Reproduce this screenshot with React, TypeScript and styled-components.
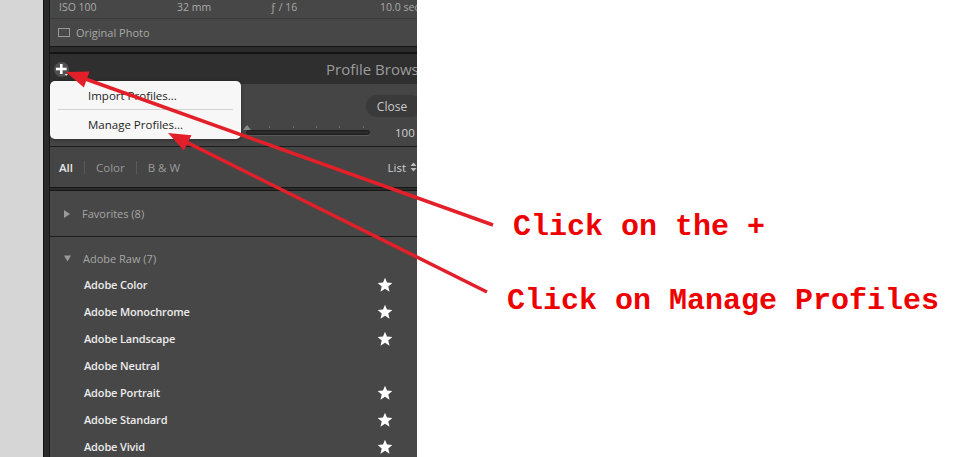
import React from 'react';
import styled, { createGlobalStyle } from 'styled-components';

const Global = createGlobalStyle`
  html, body { margin: 0; padding: 0; background: #ffffff; }
  body { width: 955px; height: 457px; overflow: hidden; font-family: "Open Sans", "Noto Sans", sans-serif; }
`;

const Page = styled.div`
  position: relative;
  display: flex;
  width: 955px;
  height: 457px;
  overflow: hidden;
  background: #ffffff;
`;

const Gutter = styled.div`
  width: 43px;
  flex: none;
  background: #d6d6d6;
`;

const Frame = styled.div`
  width: 374px;
  flex: none;
  box-sizing: border-box;
  background: #2b2b2b;
  border-left: 1px solid #141414;
  padding-left: 5px;
  overflow: hidden;
`;

const Content = styled.div`
  width: 380px;
  display: flex;
  flex-direction: column;
  border-left: 1px solid #181818;
`;

const MetaBox = styled.div`
  background: #474747;
  border-bottom: 1px solid #161616;
  display: flex;
  flex-direction: column;
`;

const MetaRow = styled.div`
  height: 18px;
  border-bottom: 1px solid #3b3b3b;
  display: grid;
  grid-template-columns: 118px 93px 110px auto;
  align-items: start;
  line-height: 14px;
  padding-left: 9px;
  font-size: 10.5px;
  color: #a9a9a9;
  white-space: nowrap;
`;

const OriginalRow = styled.div`
  height: 27px;
  display: flex;
  align-items: center;
  gap: 6px;
  padding-left: 8px;
  font-size: 11px;
  color: #a9a9a9;
`;

const Checkbox = styled.span`
  width: 10px;
  height: 7px;
  border: 1px solid #9a9a9a;
`;

const Gap = styled.div`
  height: 5px;
  border-bottom: 2px solid #141414;
`;

const Header = styled.div`
  height: 30px;
  background: #2f2f2f;
  display: flex;
  align-items: center;
  padding-left: 276px;
  font-size: 15px;
  color: #9c9c9c;
  white-space: nowrap;
`;

const AmountSection = styled.div`
  height: 63px;
  box-sizing: border-box;
  background: #454545;
  border-bottom: 1px solid #1c1c1c;
  padding-top: 11px;
  display: flex;
  flex-direction: column;
`;

const CloseButton = styled.div`
  margin-left: 316px;
  width: 56px;
  height: 22px;
  border-radius: 11px;
  background: #3a3a3a;
  color: #c9c9c9;
  font-size: 12px;
  display: flex;
  align-items: center;
  justify-content: center;
  box-sizing: border-box;
  padding-right: 4px;
`;

const SliderRow = styled.div`
  margin-top: 7px;
  height: 16px;
  display: flex;
  align-items: center;
  padding-left: 196px;
`;

const Track = styled.div`
  position: relative;
  width: 122px;
  height: 3px;
  background: #2a2a2a;
  border: 1px solid #1d1d1d;
  border-radius: 3px;
  box-shadow: 0 1px 0 #5a5a5a;
`;

const Tick = styled.span`
  position: absolute;
  top: -5px;
  width: 1px;
  height: 2px;
  background: #707070;
`;

const Thumb = styled.span`
  position: absolute;
  left: -4px;
  top: -6px;
  width: 0;
  height: 0;
  border-left: 4px solid transparent;
  border-right: 4px solid transparent;
  border-bottom: 5px solid #8a8a8a;
`;

const Value = styled.span`
  margin-left: 25px;
  font-size: 11.5px;
  color: #d0d0d0;
  white-space: nowrap;
`;

const FilterRow = styled.div`
  height: 41px;
  box-sizing: border-box;
  background: #454545;
  display: flex;
  align-items: center;
  padding-left: 9px;
  font-size: 11.5px;
  color: #9a9a9a;
  border-bottom: 1px solid #171717;
`;

const FilterItem = styled.span<{ $active?: boolean }>`
  color: ${p => (p.$active ? '#e4e4e4' : '#9a9a9a')};
  font-weight: ${p => (p.$active ? 600 : 400)};
`;

const Divider = styled.span`
  width: 1px;
  height: 13px;
  background: #5a5a5a;
  margin: 0 11px;
`;

const ListToggle = styled.span`
  margin-left: auto;
  margin-right: 13px;
  display: flex;
  align-items: center;
  gap: 4px;
  color: #cfcfcf;
  font-size: 11.5px;
`;

const DoubleRule = styled.div`
  height: 2px;
  background: #2b2b2b;
  border-bottom: 1px solid #171717;
`;

const GroupRow = styled.div<{ $h: number }>`
  height: ${p => p.$h}px;
  box-sizing: border-box;
  display: flex;
  align-items: center;
  padding-left: 14px;
  gap: 12px;
  font-size: 11px;
  color: #a6a6a6;
  background: #474747;
`;

const Favorites = styled(GroupRow)`
  border-bottom: 1px solid #1c1c1c;
`;

const RawSection = styled.div`
  background: #474747;
  padding-top: 8px;
  display: flex;
  flex-direction: column;
`;

const ProfileItem = styled.div`
  height: 27px;
  display: grid;
  grid-template-columns: 293px 16px;
  align-items: center;
  padding-left: 34px;
  font-size: 11px;
  font-weight: 600;
  color: #ececec;
  letter-spacing: -0.15px;
`;

const PlusButton = styled.div`
  position: absolute;
  left: 54px;
  top: 62px;
  width: 15px;
  height: 15px;
  border-radius: 50%;
  background: #505050;
  display: flex;
  align-items: center;
  justify-content: center;
`;

const Menu = styled.div`
  position: absolute;
  left: 50px;
  top: 81px;
  width: 191px;
  height: 58px;
  box-sizing: border-box;
  background: #f7f7f7;
  border-radius: 5px;
  box-shadow: 0 1px 4px rgba(0, 0, 0, 0.35);
  display: flex;
  flex-direction: column;
  padding: 0 8px;
`;

const MenuItem = styled.div`
  height: 28px;
  display: flex;
  align-items: center;
  padding-left: 30px;
  font-size: 11.5px;
  color: #1e1e1e;
`;

const MenuSep = styled.div`
  height: 1px;
  background: #d2d2d2;
`;

const Notes = styled.div`
  flex: 1;
  display: flex;
  flex-direction: column;
  padding-top: 212px;
  font-family: "Liberation Mono", "DejaVu Sans Mono", monospace;
  font-weight: 700;
  font-size: 30px;
  line-height: 30px;
  color: #ee0000;
  white-space: nowrap;
`;

const Note = styled.div<{ $left: number; $top: number }>`
  margin-left: ${p => p.$left}px;
  margin-top: ${p => p.$top}px;
`;

const Overlay = styled.svg`
  position: absolute;
  left: 0;
  top: 0;
  pointer-events: none;
`;

const Star = () => (
  <svg width="16" height="16" viewBox="0 0 24 24">
    <polygon
      points="12,1 15,8.4 23,9 16.9,14.1 18.8,22 12,17.8 5.2,22 7.1,14.1 1,9 9,8.4"
      fill="#ffffff"
    />
  </svg>
);

const profiles: { name: string; star: boolean }[] = [
  { name: 'Adobe Color', star: true },
  { name: 'Adobe Monochrome', star: true },
  { name: 'Adobe Landscape', star: true },
  { name: 'Adobe Neutral', star: false },
  { name: 'Adobe Portrait', star: true },
  { name: 'Adobe Standard', star: true },
  { name: 'Adobe Vivid', star: true },
];

const ticks = [22, 46, 69, 92, 116];

function arrow(tail: [number, number], tip: [number, number], len = 22, half = 8.5) {
  const dx = tip[0] - tail[0];
  const dy = tip[1] - tail[1];
  const l = Math.hypot(dx, dy);
  const ux = dx / l;
  const uy = dy / l;
  const bx = tip[0] - ux * len;
  const by = tip[1] - uy * len;
  const nx = -uy * half;
  const ny = ux * half;
  return {
    line: { x1: tail[0], y1: tail[1], x2: bx + ux * 2, y2: by + uy * 2 },
    head: `${tip[0]},${tip[1]} ${bx + nx},${by + ny} ${bx - nx},${by - ny}`,
  };
}

export default function App() {
  const a1 = arrow([493, 225], [66, 72]);
  const a2 = arrow([487, 292], [168, 133]);
  return (
    <Page>
      <Global />
      <Gutter />
      <Frame>
        <Content>
          <MetaBox>
            <MetaRow>
              <span>ISO 100</span>
              <span>32 mm</span>
              <span>ƒ / 16</span>
              <span>10.0 sec</span>
            </MetaRow>
            <OriginalRow>
              <Checkbox />
              <span>Original Photo</span>
            </OriginalRow>
          </MetaBox>
          <Gap />
          <Header>Profile Browser</Header>
          <AmountSection>
            <CloseButton>Close</CloseButton>
            <SliderRow>
              <Track>
                <Thumb />
                {ticks.map(t => (
                  <Tick key={t} style={{ left: t }} />
                ))}
              </Track>
              <Value>100</Value>
            </SliderRow>
          </AmountSection>
          <FilterRow>
            <FilterItem $active>All</FilterItem>
            <Divider />
            <FilterItem>Color</FilterItem>
            <Divider />
            <FilterItem>B &amp; W</FilterItem>
            <ListToggle>
              List
              <svg width="7" height="10" viewBox="0 0 7 10">
                <polygon points="3.5,0.5 6.5,4 0.5,4" fill="#bdbdbd" />
                <polygon points="0.5,6 6.5,6 3.5,9.5" fill="#bdbdbd" />
              </svg>
            </ListToggle>
          </FilterRow>
          <DoubleRule />
          <Favorites $h={46}>
            <svg width="6" height="8" viewBox="0 0 6 8">
              <polygon points="0,0 6,4 0,8" fill="#9a9a9a" />
            </svg>
            <span>Favorites (8)</span>
          </Favorites>
          <RawSection>
            <GroupRow $h={26}>
              <svg width="7" height="7" viewBox="0 0 7 7">
                <polygon points="0,0.5 7,0.5 3.5,6.5" fill="#9a9a9a" />
              </svg>
              <span>Adobe Raw (7)</span>
            </GroupRow>
            {profiles.map(p => (
              <ProfileItem key={p.name}>
                <span>{p.name}</span>
                {p.star ? <Star /> : <span />}
              </ProfileItem>
            ))}
          </RawSection>
        </Content>
      </Frame>
      <Notes>
        <Note $left={96} $top={0}>Click on the +</Note>
        <Note $left={90} $top={44}>Click on Manage Profiles</Note>
      </Notes>
      <PlusButton>
        <svg width="13" height="13" viewBox="0 0 13 13">
          <rect x="5" y="1" width="2.6" height="10" fill="#ffffff" />
          <rect x="1" y="4.7" width="10.6" height="2.6" fill="#ffffff" />
          <polygon points="9.5,11 13,11 11.25,13" fill="#dddddd" />
        </svg>
      </PlusButton>
      <Menu>
        <MenuItem>Import Profiles...</MenuItem>
        <MenuSep />
        <MenuItem>Manage Profiles...</MenuItem>
      </Menu>
      <Overlay width="955" height="457" viewBox="0 0 955 457">
        <line {...a1.line} stroke="#e3202a" strokeWidth="3.5" />
        <polygon points={a1.head} fill="#e3202a" />
        <line {...a2.line} stroke="#e3202a" strokeWidth="3.5" />
        <polygon points={a2.head} fill="#e3202a" />
      </Overlay>
    </Page>
  );
}
